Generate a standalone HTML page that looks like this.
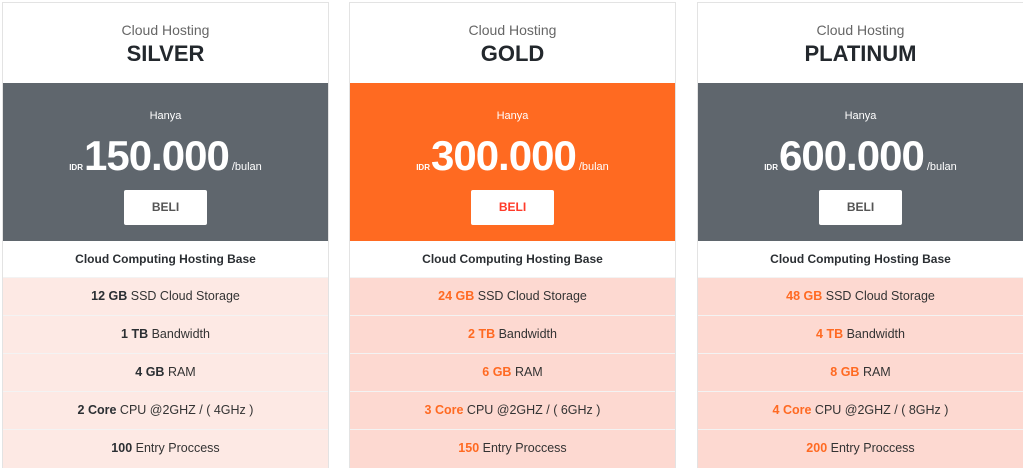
<!DOCTYPE html><html><head><style>
html,body{margin:0;width:1023px;height:468px;overflow:hidden}
body{background:#fff;font-family:"Liberation Sans",sans-serif;position:relative}
.c{position:absolute;top:2px;width:325px;height:470px;border:1px solid #e3e3e3;border-bottom:none;background:#fff;text-align:center;color:#2b2f33;overflow:hidden}
.sub{position:absolute;top:19px;left:0;right:0;font-size:14px;color:#666}
.t{position:absolute;top:38px;left:0;right:0;font-size:22px;font-weight:bold;color:#23282d}
.p{position:absolute;top:80px;left:0;right:0;height:158px;color:#fff}
.h{position:absolute;top:27px;left:0;right:0;font-size:11px}
.pr{position:absolute;top:49px;left:0;right:0;white-space:nowrap}
.pr b{font-size:42px;letter-spacing:-1px}
.pr i{font-style:normal;font-size:8px;font-weight:bold;margin-right:1px}
.pr s{text-decoration:none;font-size:11px;margin-left:3px}
.btn{position:absolute;top:107px;left:121px;width:83px;height:35px;background:#fff;border-radius:2px;font-size:12px;font-weight:bold;line-height:35px;color:#555}
.base{position:absolute;top:238px;left:0;right:0;height:36px;line-height:36px;font-size:12px;font-weight:bold}
.r{position:absolute;left:0;right:0;height:37px;line-height:37px;font-size:12.5px;color:#333;border-top:1px solid #f3f3f3}
.r b{color:#2b2f33}
.o .r b{color:#ff6a22}
</style></head><body>
<div class="c" style="left:2px">
<div class="sub">Cloud Hosting</div><div class="t">SILVER</div>
<div class="p" style="background:#5f666d"><div class="h">Hanya</div><div class="pr"><i>IDR</i><b>150.000</b><s>/bulan</s></div><div class="btn">BELI</div></div>
<div class="base">Cloud Computing Hosting Base</div>
<div style="background:#fde9e4;position:absolute;top:274px;left:0;right:0;height:200px"></div>
<div class="r" style="top:274px"><b>12 GB</b> SSD Cloud Storage</div>
<div class="r" style="top:312px"><b>1 TB</b> Bandwidth</div>
<div class="r" style="top:350px"><b>4 GB</b> RAM</div>
<div class="r" style="top:388px"><b>2 Core</b> CPU @2GHZ / ( 4GHz )</div>
<div class="r" style="top:426px"><b>100</b> Entry Proccess</div>
</div>
<div class="c o" style="left:349px">
<div class="sub">Cloud Hosting</div><div class="t">GOLD</div>
<div class="p" style="background:#ff6a21"><div class="h">Hanya</div><div class="pr"><i>IDR</i><b>300.000</b><s>/bulan</s></div><div class="btn" style="color:#ff3b2a">BELI</div></div>
<div class="base">Cloud Computing Hosting Base</div>
<div style="background:#fdd9d1;position:absolute;top:274px;left:0;right:0;height:200px"></div>
<div class="r" style="top:274px"><b>24 GB</b> SSD Cloud Storage</div>
<div class="r" style="top:312px"><b>2 TB</b> Bandwidth</div>
<div class="r" style="top:350px"><b>6 GB</b> RAM</div>
<div class="r" style="top:388px"><b>3 Core</b> CPU @2GHZ / ( 6GHz )</div>
<div class="r" style="top:426px"><b>150</b> Entry Proccess</div>
</div>
<div class="c o" style="left:697px">
<div class="sub">Cloud Hosting</div><div class="t">PLATINUM</div>
<div class="p" style="background:#5f666d"><div class="h">Hanya</div><div class="pr"><i>IDR</i><b>600.000</b><s>/bulan</s></div><div class="btn">BELI</div></div>
<div class="base">Cloud Computing Hosting Base</div>
<div style="background:#fdd9d1;position:absolute;top:274px;left:0;right:0;height:200px"></div>
<div class="r" style="top:274px"><b>48 GB</b> SSD Cloud Storage</div>
<div class="r" style="top:312px"><b>4 TB</b> Bandwidth</div>
<div class="r" style="top:350px"><b>8 GB</b> RAM</div>
<div class="r" style="top:388px"><b>4 Core</b> CPU @2GHZ / ( 8GHz )</div>
<div class="r" style="top:426px"><b>200</b> Entry Proccess</div>
</div>
</body></html>
